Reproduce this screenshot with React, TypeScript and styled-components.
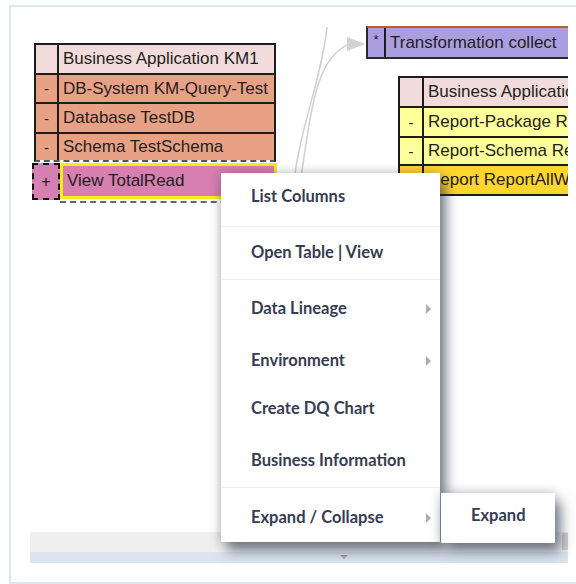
import styled, { createGlobalStyle } from "styled-components";

const GlobalStyle = createGlobalStyle`
  html, body { margin: 0; padding: 0; background: #fff; overflow: hidden; }
  * { box-sizing: border-box; }
`

const Frame = styled.div`
  position: relative;
  margin: 5px 0 0 9px;
  width: 580px;
  height: 579px;
  border: 2px solid #dde6f1;
  border-right: none;
  display: flex;
  flex-direction: column;
`

const Canvas = styled.div`
  position: relative;
  margin-left: 19px;
  width: 538px;
  height: 525px;
  overflow: hidden;
  background: #fff;
  font-family: "Liberation Sans", Arial, sans-serif;
  font-size: 17px;
  color: #1e1e1e;
`

const HScroll = styled.div`
  margin-left: 19px;
  width: 538px;
  height: 20px;
  background: #efefef;
  display: flex;
  justify-content: flex-end;
  align-items: flex-start;
`

const ScrollThumb = styled.div`
  width: 6px;
  height: 17px;
  margin: 1px 0 0;
  background: #cfcfcf;
`

const FooterBand = styled.div`
  margin-left: 19px;
  width: 538px;
  height: 11px;
  background: #dce5ef;
  display: flex;
  justify-content: center;
  padding: 3px 0 0 90px;
`

const DownTick = styled.div`
  width: 0;
  height: 0;
  border-left: 4px solid transparent;
  border-right: 4px solid transparent;
  border-top: 4px solid #9aa3ad;
`

interface NodeProps {
    $x: number
    $y: number
    $w: number
    $dashedBottom?: boolean
}
const TableNode = styled.div<NodeProps>`
  position: absolute;
  left: ${p => p.$x}px;
  top: ${p => p.$y}px;
  width: ${p => p.$w}px;
  border: 2px solid #1c1c1c;
  border-bottom: ${p => p.$dashedBottom ? "2px dashed #555" : "2px solid #1c1c1c"};
  display: flex;
  flex-direction: column;
`

interface RowProps {
    $bg: string
    $h: number
    $key: number
}
const Row = styled.div<RowProps>`
  box-sizing: content-box;
  display: grid;
  grid-template-columns: ${p => p.$key}px 1fr;
  height: ${p => p.$h}px;
  background: ${p => p.$bg};
  & + & { border-top: 2px solid #1c1c1c; }
`

const KeyCell = styled.div`
  border-right: 2px solid #1c1c1c;
  display: flex;
  align-items: center;
  justify-content: center;
  font-size: 15px;
`

const NameCell = styled.div`
  display: flex;
  align-items: center;
  padding-left: 4px;
  white-space: nowrap;
  overflow: hidden;
`

const TransformNode = styled.div`
  position: absolute;
  left: 336px;
  top: 19px;
  width: 260px;
  height: 33px;
  display: grid;
  grid-template-columns: 18px 1fr;
  background: #ab9ee0;
  border-top: 2px solid #b0621e;
  border-bottom: 2px solid #2a2a2a;
  border-left: 2px solid #2a2a2a;
`

const StarCell = styled(KeyCell)`
  align-items: flex-start;
  padding-top: 4px;
  font-size: 13px;
`

const SelectedRow = styled.div`
  position: absolute;
  left: 2px;
  top: 156px;
  display: flex;
`

const PlusCell = styled.div`
  width: 28px;
  height: 37px;
  background: #d67fb1;
  border: 2px dashed #111;
  display: flex;
  align-items: center;
  justify-content: center;
  font-size: 16px;
`

const SelectedNameWrap = styled.div`
  width: 217px;
  padding-bottom: 2px;
  border-bottom: 2px dashed #666;
`

const SelectedName = styled.div`
  height: 36px;
  background: #d77fb0;
  border: 3px solid #f3ee14;
  display: flex;
  align-items: center;
  padding-left: 4px;
`

const Links = styled.svg`
  position: absolute;
  left: 0;
  top: 0;
  pointer-events: none;
`

const Menu = styled.div`
  position: absolute;
  left: 210px;
  top: 166px;
  width: 219px;
  background: #fff;
  box-shadow: 0 0 10px rgba(40, 50, 70, 0.3), 6px 9px 12px rgba(30, 40, 60, 0.55);
  font-family: Lato, "Open Sans", sans-serif;
  font-weight: 700;
  font-size: 16.5px;
  color: #363c52;
  z-index: 2;
`

interface ItemProps {
    $h: number
    $divider?: boolean
    $nudge?: number
}
const MenuItem = styled.div<ItemProps>`
  height: ${p => p.$h}px;
  display: flex;
  align-items: center;
  justify-content: space-between;
  padding: ${p => Math.max(p.$nudge ?? 0, 0)}px 9px ${p => Math.max(-(p.$nudge ?? 0), 0)}px 30px;
  border-bottom: ${p => p.$divider ? "1px solid #eceef2" : "none"};
  white-space: nowrap;
`

const SubArrow = styled.span`
  width: 0;
  height: 0;
  border-top: 5px solid transparent;
  border-bottom: 5px solid transparent;
  border-left: 5px solid #a9adb7;
  margin-top: 2px;
`

const SubMenu = styled(Menu)`
  left: 430px;
  top: 486px;
  width: 114px;
  z-index: 3;
`

const leftRows = [
    { key: "", name: "Business Application KM1", bg: "#f2dcdb", h: 28 },
    { key: "-", name: "DB-System KM-Query-Test", bg: "#e9a185", h: 27 },
    { key: "-", name: "Database TestDB", bg: "#e9a185", h: 28 },
    { key: "-", name: "Schema TestSchema", bg: "#e9a185", h: 26 },
]

const rightRows = [
    { key: "", name: "Business Application KM2", bg: "#f2dcdb", h: 28 },
    { key: "-", name: "Report-Package ReportPackage", bg: "#ffff9c", h: 28 },
    { key: "-", name: "Report-Schema ReportSchema", bg: "#ffff9c", h: 26 },
    { key: "-", name: "Report ReportAllWithData", bg: "#ffd52e", h: 28 },
]

// nudge > 0 pushes the label down, < 0 lifts it
const menuItems = [
    { label: "List Columns", h: 54, divider: true, nudge: -7 },
    { label: "Open Table | View", h: 53, divider: true, nudge: -3 },
    { label: "Data Lineage", h: 52, sub: true, nudge: 3 },
    { label: "Environment", h: 52, sub: true, nudge: 3 },
    { label: "Create DQ Chart", h: 52, nudge: -4 },
    { label: "Business Information", h: 52, divider: true, nudge: -4 },
    { label: "Expand / Collapse", h: 54, sub: true, nudge: 3 },
]

const App: React.FC = () => {
    return (
        <>
            <GlobalStyle />
            <Frame>
                <Canvas>
                    <Links width="538" height="200" viewBox="0 0 538 200">
                        <g fill="none" stroke="#d2d2d2" strokeWidth="1.6">
                            <path d="M297 20 C 292 70, 270 120, 264 175" />
                            <path d="M270 175 C 280 120, 282 50, 320 37" />
                        </g>
                        <path d="M317 30 L335 37 L317 44 Z" fill="#d2d2d2" />
                    </Links>

                    <TableNode $x={4} $y={36} $w={242} $dashedBottom>
                        {leftRows.map(r => (
                            <Row key={r.name} $bg={r.bg} $h={r.h} $key={23}>
                                <KeyCell>{r.key}</KeyCell>
                                <NameCell>{r.name}</NameCell>
                            </Row>
                        ))}
                    </TableNode>

                    <SelectedRow>
                        <PlusCell>+</PlusCell>
                        <SelectedNameWrap>
                            <SelectedName>View TotalRead</SelectedName>
                        </SelectedNameWrap>
                    </SelectedRow>

                    <TransformNode>
                        <StarCell>*</StarCell>
                        <NameCell>Transformation collect</NameCell>
                    </TransformNode>

                    <TableNode $x={368} $y={69} $w={260}>
                        {rightRows.map(r => (
                            <Row key={r.name} $bg={r.bg} $h={r.h} $key={24}>
                                <KeyCell>{r.key}</KeyCell>
                                <NameCell>{r.name}</NameCell>
                            </Row>
                        ))}
                    </TableNode>
                </Canvas>
                <HScroll>
                    <ScrollThumb />
                </HScroll>
                <FooterBand>
                    <DownTick />
                </FooterBand>

                <Menu>
                    {menuItems.map(m => (
                        <MenuItem key={m.label} $h={m.h} $divider={m.divider} $nudge={m.nudge}>
                            {m.label}
                            {m.sub ? <SubArrow /> : null}
                        </MenuItem>
                    ))}
                </Menu>
                <SubMenu>
                    <MenuItem $h={50} $nudge={-6}>Expand</MenuItem>
                </SubMenu>
            </Frame>
        </>
    )
}

export default App;
